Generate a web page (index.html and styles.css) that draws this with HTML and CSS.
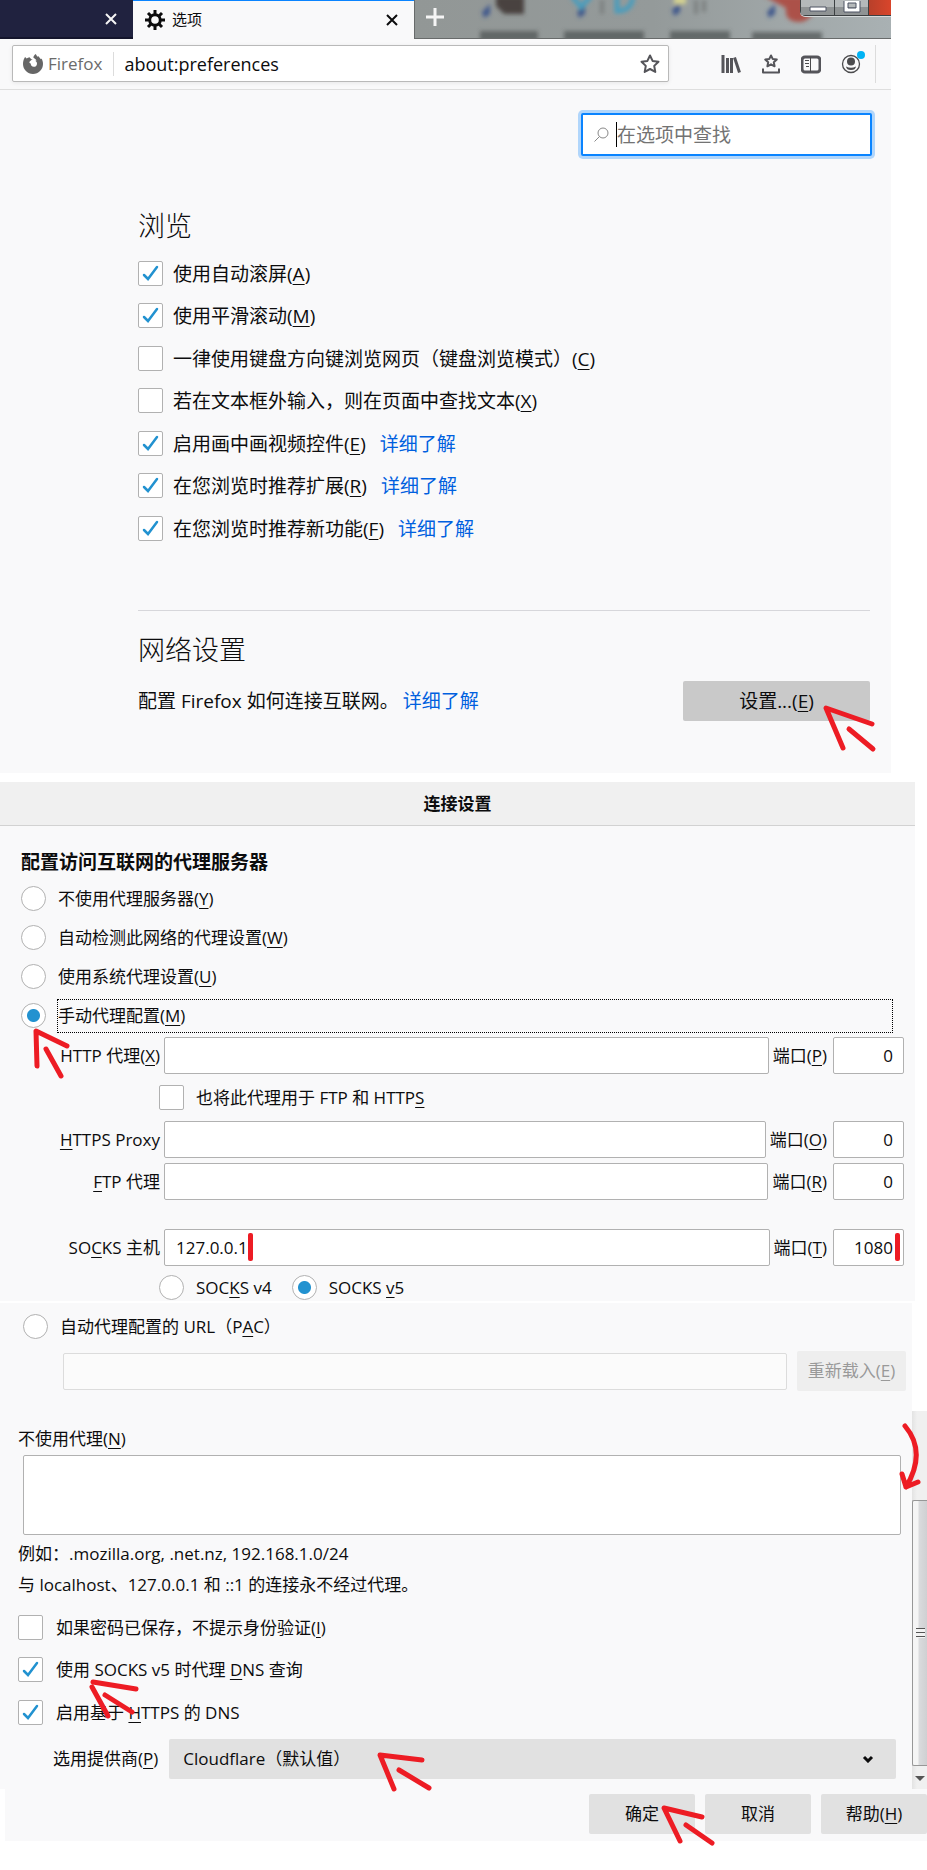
FILE: index.html
```html
<!DOCTYPE html>
<html lang="zh-CN">
<head>
    <meta charset="UTF-8">
    <meta name="viewport" content="width=device-width, initial-scale=1.0">
    <title>选项</title>
    <link rel="stylesheet" href="styles.css">
</head>
<body>
    <section class="browser">
        <header class="tabs">
            <div class="tab tab-old">
                <button class="tab-close" aria-label="关闭标签页"><svg width="12" height="12" viewBox="0 0 12 12"><path d="M1 1l10 10M11 1L1 11"/></svg></button>
            </div>
            <div class="tab tab-active">
                <svg class="gear" width="20" height="20" viewBox="0 0 20 20"><circle cx="10" cy="10" r="5.3"/><path d="M10 0v4M10 16v4M0 10h4M16 10h4M3 3l3 3M14 14l3 3M17 3l-3 3M6 14l-3 3"/></svg>
                <span class="tab-title">选项</span>
                <button class="tab-close" aria-label="关闭标签页"><svg width="12" height="12" viewBox="0 0 12 12"><path d="M1 1l10 10M11 1L1 11"/></svg></button>
            </div>
            <div class="desktop">
                <button class="new-tab" aria-label="新建标签页"><svg width="18" height="18" viewBox="0 0 18 18"><path d="M9 0v18M0 9h18"/></svg></button>
                <svg class="desktop-icons" width="387" height="39" viewBox="0 0 387 39">
                    <defs><filter id="soft" x="-20%" y="-20%" width="140%" height="140%"><feGaussianBlur stdDeviation="2"/></filter></defs>
                    <g filter="url(#soft)">
                        <path fill="#4a4340" d="M20 -4h28v18h-20l-8-8z"/>
                        <path fill="#41588c" d="M6 12l8-8v10l-6 4zM101 12l8-8v10l-6 4zM196 10l8-8v10l-6 4zM291 12l8-8v10l-6 4z"/>
                        <path fill="none" stroke="#4a9dbd" stroke-width="5" d="M96-4l9 11 10-11M141-3v14q14 0 16-14"/>
                        <path fill="#7c8080" d="M124 0h4v14h-4zM218 0h4v14h-4zM226 0h4v12h-4z"/>
                        <path fill="#d7d490" d="M198-3h12v7h-12z"/>
                        <path fill="#ac5148" d="M288-4h52q0 24-16 26-16 0-14-14z"/>
                        <path fill="#4c5151" d="M4 31h58v10H4zM88 31h80v10H88zM194 31h60v10h-60zM276 32h70v9h-70z" opacity=".7"/>
                    </g>
                </svg>
                <div class="window-buttons">
                    <button class="win" aria-label="最小化"><svg width="18" height="6" viewBox="0 0 18 6"><path d="M1 1h16v4H1z"/></svg></button>
                    <button class="win" aria-label="最大化"><svg width="18" height="13" viewBox="0 0 18 13"><path fill-rule="evenodd" d="M1-2h16v13H1zM5 2v5h8V2z"/></svg></button>
                    <button class="win win-close" aria-label="关闭"></button>
                </div>
            </div>
        </header>

        <nav class="toolbar">
            <div class="urlbar">
                <svg width="20" height="20" viewBox="0 0 20 20"><path fill="#666" d="M1.5 4l.6-1 1.5 1.5C4.500 3.800 5.500 3.400 6.500 3.300L8.300 5.300 9.600 5c-1 1.200-2.600 2-3.200 3 0 1 .6 1.600 1.500 1.500-.5 1.500 1 3.300 2.800 3.300 2 0 3.400-1.500 3.300-3.400-.1-1.200-.7-2-1.700-2.400.3-.4.8-.5 1.300-.5C12.700 5.100 11 4 10.300 3.500 10.500 2 11.600.6 13 0c0 1.300 1 2 2 3l.7-1c.4 1.300 1.300 2 2.300 3.200l.5-.8c1 1.700 1.500 3.600 1.500 5.600 0 5.500-4.500 10-10 10S0 15.500 0 10c0-2.300.5-4.300 1.500-6z"/></svg>
                <span class="identity">Firefox</span>
                <input class="url" type="text" value="about:preferences" aria-label="地址">
                <svg width="20" height="20" viewBox="0 0 20 20"><path class="line" d="M10 1.500l2.600 5.400 5.900.8-4.300 4.200 1.100 6-5.300-2.900-5.300 2.900 1.100-6L1.500 7.700l5.900-.8z"/></svg>
            </div>
            <div class="tools">
                <button class="tool" aria-label="书库"><svg width="20" height="20" viewBox="0 0 20 20"><path class="line thick" d="M2 1v18M6.500 4v15M10.500 4v15M13.500 3.500l5 15"/></svg></button>
                <button class="tool" aria-label="书签"><svg width="20" height="20" viewBox="0 0 20 20"><path class="line" d="M10 1.500l1.800 3.600 4 .5-3 2.700.8 4-3.600-2-3.600 2 .8-4-3-2.700 4-.5zM2 14.500V18.500h16v-4"/></svg></button>
                <button class="tool" aria-label="侧栏"><svg width="20" height="20" viewBox="0 0 20 20"><rect class="line thick" x="1" y="3" width="18" height="15" rx="3"/><path fill="none" stroke="#4b4b4d" d="M9.500 3v15M4 6.500h4M4 9.500h4M5 12.500h3"/></svg></button>
                <button class="tool account" aria-label="帐户"><svg width="20" height="20" viewBox="0 0 20 20"><circle cx="10" cy="10" r="8.500" fill="none" stroke="#4b4b4d" stroke-width="1.300"/><circle cx="10" cy="7.500" r="4" fill="#4b4b4d"/><path fill="#4b4b4d" d="M5 12.500q5 2.500 10 0-.5 3.500-5 3.500t-5-3.500z"/></svg><span class="dot"></span></button>
            </div>
        </nav>

        <main class="prefs">
            <div class="search">
                <svg width="15" height="15" viewBox="0 0 15 15"><circle cx="9" cy="6" r="5"/><path d="M5.500 9.500L.5 14.500"/></svg>
                <span class="caret"></span>
                <input type="search" placeholder="在选项中查找" aria-label="在选项中查找">
            </div>

            <h2>浏览</h2>
            <ul class="options">
                <li><input type="checkbox" id="autoscroll" checked><label for="autoscroll">使用自动滚屏(<u>A</u>)</label></li>
                <li><input type="checkbox" id="smooth" checked><label for="smooth">使用平滑滚动(<u>M</u>)</label></li>
                <li><input type="checkbox" id="cursor"><label for="cursor">一律使用键盘方向键浏览网页（键盘浏览模式）(<u>C</u>)</label></li>
                <li><input type="checkbox" id="find"><label for="find">若在文本框外输入，则在页面中查找文本(<u>X</u>)</label></li>
                <li><input type="checkbox" id="pip" checked><label for="pip">启用画中画视频控件(<u>E</u>)</label><a href="#">详细了解</a></li>
                <li><input type="checkbox" id="ext" checked><label for="ext">在您浏览时推荐扩展(<u>R</u>)</label><a href="#">详细了解</a></li>
                <li><input type="checkbox" id="feat" checked><label for="feat">在您浏览时推荐新功能(<u>F</u>)</label><a href="#">详细了解</a></li>
            </ul>

            <hr>
            <h2>网络设置</h2>
            <div class="network">
                <p>配置 Firefox 如何连接互联网。<a href="#">详细了解</a></p>
                <div class="anchor">
                    <button class="btn btn-settings">设置...(<u>E</u>)</button>
                    <svg class="mark mark-settings" viewBox="0 0 50 44"><path d="M48 18L2 2l17 40M25 23l24 20"/></svg>
                </div>
            </div>
        </main>
    </section>

    <section class="dialog">
        <h1>连接设置</h1>
        <div class="proxy">
            <h3>配置访问互联网的代理服务器</h3>
            <div class="radio"><input type="radio" name="proxy" id="none"><label for="none">不使用代理服务器(<u>Y</u>)</label></div>
            <div class="radio"><input type="radio" name="proxy" id="detect"><label for="detect">自动检测此网络的代理设置(<u>W</u>)</label></div>
            <div class="radio"><input type="radio" name="proxy" id="system"><label for="system">使用系统代理设置(<u>U</u>)</label></div>
            <div class="radio anchor">
                <input type="radio" name="proxy" id="manual" checked><label class="focused" for="manual">手动代理配置(<u>M</u>)</label>
                <svg class="mark mark-manual" viewBox="0 0 34 48"><path d="M33 17L2 2l1 35M12 20l15 27"/></svg>
            </div>

            <div class="field">
                <label for="http">HTTP 代理(<u>X</u>)</label>
                <input type="text" id="http">
                <label for="http-port">端口(<u>P</u>)</label>
                <input type="text" class="port" id="http-port" value="0">
            </div>
            <div class="sub share"><input type="checkbox" id="share"><label for="share">也将此代理用于 FTP 和 HTTP<u>S</u></label></div>
            <div class="field">
                <label for="https"><u>H</u>TTPS Proxy</label>
                <input type="text" id="https">
                <label for="https-port">端口(<u>O</u>)</label>
                <input type="text" class="port" id="https-port" value="0">
            </div>
            <div class="field">
                <label for="ftp"><u>F</u>TP 代理</label>
                <input type="text" id="ftp">
                <label for="ftp-port">端口(<u>R</u>)</label>
                <input type="text" class="port" id="ftp-port" value="0">
            </div>
            <div class="field field-socks anchor">
                <label for="socks">SO<u>C</u>KS 主机</label>
                <input type="text" id="socks" value="127.0.0.1">
                <label for="socks-port">端口(<u>T</u>)</label>
                <input type="text" class="port" id="socks-port" value="1080">
                <span class="bar bar-host"></span>
                <span class="bar bar-port"></span>
            </div>
            <div class="sub">
                <input type="radio" name="socks" id="v4"><label for="v4">SOC<u>K</u>S v4</label>
                <input type="radio" name="socks" id="v5" checked><label for="v5">SOCKS <u>v</u>5</label>
            </div>
        </div>
    </section>

    <section class="lower">
        <div class="pane">
            <div class="radio pac"><input type="radio" name="proxy" id="pac"><label for="pac">自动代理配置的 URL（P<u>A</u>C）</label></div>
            <div class="pac-url">
                <input type="text" aria-label="自动代理配置的 URL" disabled>
                <button class="btn" disabled>重新载入(<u>E</u>)</button>
            </div>

            <label class="bypass-label" for="bypass">不使用代理(<u>N</u>)</label>
            <textarea id="bypass"></textarea>
            <p>例如：.mozilla.org, .net.nz, 192.168.1.0/24</p>
            <p>与 localhost、127.0.0.1 和 ::1 的连接永不经过代理。</p>

            <ul class="options">
                <li><input type="checkbox" id="noprompt"><label for="noprompt">如果密码已保存，不提示身份验证(<u>I</u>)</label></li>
                <li class="anchor">
                    <input type="checkbox" id="dns" checked><label for="dns">使用 SOCKS v5 时代理 <u>D</u>NS 查询</label>
                    <svg class="mark mark-dns" viewBox="0 0 48 38"><path d="M3 2l43 7M2 7l16 29M15 15l27 17"/></svg>
                </li>
                <li><input type="checkbox" id="doh" checked><label for="doh">启用基于 <u>H</u>TTPS 的 DNS</label></li>
            </ul>
            <div class="provider anchor">
                <label for="provider">选用提供商(<u>P</u>)</label>
                <select id="provider"><option>Cloudflare（默认值）</option></select>
                <svg class="mark mark-provider" viewBox="0 0 52 38"><path d="M44 7L2 2l14 34M21 17l30 18"/></svg>
            </div>
        </div>
        <div class="scrollbar">
            <div class="thumb"><span class="grip"></span></div>
            <svg class="down" width="10" height="6" viewBox="0 0 10 6"><path fill="#555" d="M0 1h10L5 6z"/></svg>
            <svg class="mark mark-scroll" viewBox="0 0 20 66"><path d="M5 3q22 26 1 61M2 51l4 13 12-5"/></svg>
        </div>
    </section>

    <footer class="actions">
        <div class="anchor">
            <button class="btn">确定</button>
            <svg class="mark mark-ok" viewBox="0 0 52 38"><path d="M40 11L2 2l16 33M24 19l26 18"/></svg>
        </div>
        <button class="btn">取消</button>
        <button class="btn">帮助(<u>H</u>)</button>
    </footer>
</body>
</html>
```
FILE: styles.css
```css
* {
    box-sizing: border-box;
}
body {
    margin: 0;
    background: white;
    color: #0c0c0d;
    font-family: "Open Sans", "Noto Sans CJK SC", sans-serif;
    font-size: 17px;
    line-height: 24px;
}
h1, h2, h3, p, ul {
    margin: 0;
    padding: 0;
}
button, input, select, textarea {
    font: inherit;
    color: inherit;
    margin: 0;
    border: none;
    border-radius: 2px;
}
button {
    padding: 0;
    background: none;
}
svg {
    flex: none;
    display: block;
}
u {
    text-decoration-thickness: 1px;
    text-underline-offset: 3px;
}
a {
    color: #0060df;
    text-decoration: none;
}
.anchor {
    position: relative;
}

/* form controls */
input[type="text"], textarea {
    min-width: 0;
    background: white;
    border: 1px solid #b1b1b1;
    padding: 0 11px;
}
input[type="checkbox"], input[type="radio"] {
    appearance: none;
    flex: none;
    width: 25px;
    height: 25px;
    background: white center no-repeat;
    border: 1px solid #b1b1b1;
}
input[type="radio"] {
    border-radius: 50%;
}
input[type="checkbox"]:checked {
    background-image: url("data:image/svg+xml,%3Csvg xmlns='http://www.w3.org/2000/svg' width='17' height='17'%3E%3Cpath d='M2 10l4 4L15 2' fill='none' stroke='%232292d0' stroke-width='2.500' stroke-linecap='round'/%3E%3C/svg%3E");
}
input[type="radio"]:checked {
    background-image: radial-gradient(circle, #2292d0 6px, transparent 7px);
}
.btn {
    width: 106px;
    height: 40px;
    background: #e1e1e1;
}
.btn:disabled {
    background: #eeeeee;
    color: #999;
}

/* browser window */
.browser {
    margin-right: 36px;
    background: #f9f9fa;
    font-size: 19px;
}
.tabs {
    display: flex;
    height: 39px;
}
.tab {
    display: flex;
    align-items: center;
    justify-content: flex-end;
    padding-right: 16px;
}
.tab-old {
    width: 133px;
    background: #20223f;
    border-bottom: 2px solid #14152c;
}
.tab-active {
    width: 281px;
    padding: 0 16px 0 12px;
    border-top: 1px solid #0a84ff;
}
.tab-title {
    flex: 1;
    margin-left: 7px;
    font-size: 15px;
    line-height: 20px;
    padding-bottom: 2px;
}
.tab-close path, .new-tab path {
    fill: none;
    stroke: #0c0c0d;
    stroke-width: 2;
}
.tab-old path, .new-tab path {
    stroke: #f5f5f5;
}
.gear {
    fill: none;
    stroke: #0c0c0d;
    stroke-width: 3;
}
.desktop {
    flex: 1;
    display: flex;
    position: relative;
    overflow: hidden;
    background: linear-gradient(90deg, #929796, #949a9a 50%, #a9b1b3);
    border-left: 1px solid #686b6b;
    border-bottom: 1px solid #686b6b;
}
.new-tab {
    align-self: flex-start;
    margin: 8px 12px 0 11px;
}
.new-tab path {
    stroke-width: 3;
}
.desktop-icons {
    margin-left: 20px;
}
.window-buttons {
    position: absolute;
    top: 0;
    right: 0;
    display: flex;
    height: 16px;
    border: 1px solid #3c4042;
    border-width: 0 0 1px 1px;
    border-radius: 0 0 0 5px;
    background: #a3a7a8;
    box-shadow: 0 1px 0 #d5d9da;
}
.win {
    width: 34px;
    display: flex;
    align-items: center;
    justify-content: center;
    border-right: 1px solid #3c4042;
    border-radius: 0;
    background: linear-gradient(#b5b9ba 45%, #8f9394 46%);
}
.win path {
    fill: white;
    stroke: #4d5262;
}
.win:first-child {
    align-items: flex-end;
    padding-bottom: 3px;
}
.win-close {
    width: 22px;
    border: none;
    background: linear-gradient(90deg, #b8402a, #d9452b);
}
.toolbar {
    display: flex;
    height: 51px;
    padding: 6px 15px 6px 12px;
    border-bottom: 1px solid #dedede;
}
.urlbar {
    flex: 1;
    display: flex;
    align-items: center;
    height: 37px;
    padding: 0 8px 0 10px;
    background: white;
    border: 1px solid #b9b9b9;
    border-radius: 2px;
    box-shadow: 0 1px 4px rgba(0, 0, 0, 0.08);
}
.identity {
    margin: 0 10px 0 5px;
    padding-right: 11px;
    border-right: 1px solid #dcdcdc;
    color: #6b6b6b;
    font-size: 17px;
}
.urlbar .url {
    flex: 1;
    padding: 0;
    border: none;
    font-size: 18px;
}
.line {
    fill: none;
    stroke: #55555a;
    stroke-width: 2;
    stroke-linejoin: round;
}
.thick {
    stroke-width: 3;
}
.tools {
    display: flex;
    gap: 20px;
    padding: 0 14px 0 52px;
    border-right: 1px solid #dcdcdc;
}
.account {
    position: relative;
}
.dot {
    position: absolute;
    top: 6px;
    right: -4px;
    width: 8px;
    height: 8px;
    border-radius: 50%;
    background: #00b3f4;
}
.prefs {
    padding: 23px 21px 52px 138px;
}
.search {
    display: flex;
    align-items: center;
    width: 291px;
    height: 43px;
    margin: 0 -2px 50px auto;
    padding-left: 11px;
    background: white;
    border: 2px solid #0a84ff;
    border-radius: 2px;
    box-shadow: 0 0 0 3px rgba(10, 132, 255, 0.3);
}
.search svg {
    fill: none;
    stroke: #888;
}
.search input {
    flex: 1;
    min-width: 0;
    padding: 0;
    background: none;
    outline: none;
}
.search input::placeholder {
    color: #737373;
}
.caret {
    width: 1px;
    height: 25px;
    margin-left: 7px;
    background: black;
}
h2 {
    font-size: 27px;
    font-weight: 300;
    line-height: 40px;
}
.options {
    display: flex;
    flex-direction: column;
    gap: 17px;
    list-style: none;
}
.options li {
    display: flex;
    align-items: center;
    height: 25px;
}
.options li:nth-child(even) {
    margin-bottom: 1px;
}
.options label {
    margin-left: 10px;
}
.options a {
    margin-left: 14px;
}
.prefs .options {
    margin-top: 15px;
}
hr {
    height: 1px;
    margin: 69px 0 19px;
    border: none;
    background: #d7d7db;
}
.network {
    display: flex;
    align-items: center;
    justify-content: space-between;
    margin-top: 11px;
}
.network a {
    margin-left: 4px;
}
.btn-settings {
    width: 187px;
    background: #c9c9c9;
}

/* connection dialog */
.dialog {
    margin: 9px 12px 2px 0;
    background: #f9f9fa;
}
h1 {
    height: 44px;
    background: #f0f0f0;
    border-bottom: 1px solid #d2d2d2;
    font-size: 17px;
    line-height: 44px;
    text-align: center;
}
.proxy {
    padding: 24px 11px 1px 0;
}
h3 {
    margin: 0 0 4px 21px;
    font-size: 19px;
    line-height: 25px;
}
.radio {
    display: flex;
    align-items: center;
    height: 39px;
    padding: 0 11px 0 21px;
}
.radio label {
    flex: 1;
    margin-left: 11px;
    padding: 4px 1px;
}
.radio .focused {
    border: 1px dotted black;
    padding: 4px 0;
}
.field {
    display: flex;
    align-items: center;
    gap: 4px;
    margin-top: 5px;
}
.field label:first-child {
    width: 160px;
    text-align: right;
}
.field input {
    flex: 1;
    height: 37px;
}
.field .port {
    flex: none;
    width: 71px;
    margin-left: 2px;
    padding: 0 10px;
    text-align: right;
}
.radio + .field {
    margin-top: 2px;
}
.field-socks {
    margin-top: 29px;
}
.sub {
    display: flex;
    align-items: center;
    margin: 9px 0 0 159px;
}
.share {
    margin: 11px 0 11px 159px;
}
.sub label {
    margin: 0 20px 0 12px;
}

/* lower half of the dialog */
.lower {
    display: flex;
}
.pane {
    flex: 1;
    padding: 4px 11px 10px 18px;
    background: #f9f9fa;
}
.pac {
    padding-left: 5px;
}
.pac-url {
    display: flex;
    align-items: center;
    gap: 10px;
    margin: 5px -5px 36px 45px;
}
.pac-url input {
    flex: 1;
    height: 37px;
    background: #fbfbfb;
    border-color: #dcdcdc;
}
.pac-url .btn {
    width: 109px;
}
.bypass-label {
    display: block;
}
textarea {
    display: block;
    width: calc(100% - 5px);
    height: 80px;
    margin: 4px 0 3px 5px;
    resize: none;
}
.pane p {
    line-height: 31px;
}
.pane .options {
    margin-top: 15px;
}
.pane .options label {
    margin-left: 13px;
}
.provider {
    display: flex;
    align-items: center;
    gap: 11px;
    margin: 14px 5px 0 35px;
}
select {
    appearance: none;
    flex: 1;
    height: 40px;
    padding: 0 14px;
    background: #e1e1e1 url("data:image/svg+xml,%3Csvg xmlns='http://www.w3.org/2000/svg' width='12' height='8'%3E%3Cpath d='M2 2l4 4 4-4' fill='none' stroke='%230c0c0d' stroke-width='3'/%3E%3C/svg%3E") no-repeat right 22px center;
}
.scrollbar {
    position: relative;
    width: 15px;
    display: flex;
    flex-direction: column;
    align-items: center;
    margin-top: 108px;
    background: linear-gradient(90deg, #e3e3e3, #f0f0f0 5px);
}
.thumb {
    align-self: stretch;
    flex: 1;
    display: flex;
    align-items: center;
    justify-content: center;
    margin-top: 89px;
    border: 1px solid #979797;
    border-right: none;
    border-radius: 2px 0 0 2px;
    background: linear-gradient(90deg, #f5f5f5 5px, #dadbdd 6px, #cfd0d2);
}
.grip {
    width: 9px;
    height: 10px;
    background: repeating-linear-gradient(#555 0 1px, #f3f3f3 1px 4px);
}
.down {
    margin: 9px 0 8px;
}
.actions {
    display: flex;
    justify-content: flex-end;
    gap: 10px;
    margin: 0 0 29px 5px;
    padding: 5px 0 7px;
    background: #f9f9fa;
}

/* hand-drawn red marks */
.mark {
    position: absolute;
    overflow: visible;
    pointer-events: none;
    fill: none;
    stroke: #ed1c24;
    stroke-width: 5;
    stroke-linecap: round;
    stroke-linejoin: round;
}
.mark-settings {
    top: 25px;
    right: -4px;
    width: 50px;
}
.mark-manual {
    top: 33px;
    left: 34px;
    width: 34px;
}
.mark-dns {
    top: 23px;
    left: 72px;
    width: 48px;
}
.mark-provider {
    top: 14px;
    left: 325px;
    width: 52px;
}
.mark-scroll {
    top: 12px;
    left: -12px;
    width: 20px;
}
.mark-ok {
    top: 12px;
    left: 73px;
    width: 52px;
}
.bar {
    position: absolute;
    top: 4px;
    width: 5px;
    height: 28px;
    border-radius: 2px;
    background: #ed1c24;
}
.bar-host {
    left: 248px;
}
.bar-port {
    right: 4px;
}
```
